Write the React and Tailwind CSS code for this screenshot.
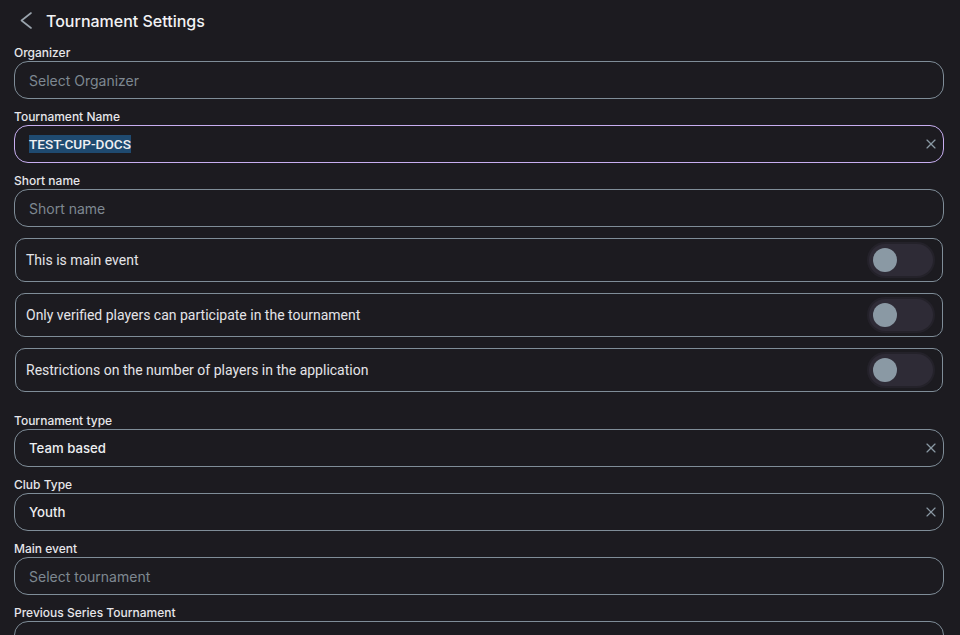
import { X } from "lucide-react";

const inter = { fontFamily: "Inter, 'Noto Sans', sans-serif" };

function Field({ label, placeholder, value, clearable, focused, selected, first }) {
  return (
    <div className={first ? "" : "mt-[9px]"}>
      <div className="text-[12px] leading-4 pt-px -mb-px text-[#e6e6ea] font-medium">{label}</div>
      <div
        className={`mt-px h-[38px] rounded-[14px] border flex items-center pl-[14px] pr-[4px] ${
          focused ? "border-[#c7aef0]" : "border-[#7f8d98]"
        }`}
      >
        <div className="flex-1 text-[14px]">
          {value ? (
            selected ? (
              <span
                className="bg-[#1f4a70] text-[#f0f0f2] text-[13.6px] font-medium py-[1px]"
                style={{ fontFamily: "Roboto, sans-serif" }}
              >
                {value}
              </span>
            ) : (
              <span className="text-[#eceef0] text-[13.2px] font-medium">{value}</span>
            )
          ) : (
            <span className="text-[#7e8891]">{placeholder}</span>
          )}
        </div>
        {clearable && <X className="w-[16px] h-[16px] text-[#8a98a3]" strokeWidth={1.75} />}
      </div>
    </div>
  );
}

function ToggleRow({ label }) {
  return (
    <div className="mt-[11px] mx-px h-[44px] rounded-[10px] border border-[#7f8d98] flex items-center pl-[10px] pr-[9px]">
      <div className="flex-1 text-[14px] text-[#e4e4e8]" style={{ fontFamily: "Roboto, sans-serif" }}>
        {label}
      </div>
      <div className="w-[64px] h-[32px] rounded-full bg-[#2e2b36] ring-2 ring-[#24222a] flex items-center pl-[4px]">
        <div className="w-[24px] h-[24px] rounded-full bg-[#8a99a4]" />
      </div>
    </div>
  );
}

export default function App() {
  return (
    <div className="h-[635px] overflow-hidden bg-[#1c1b20] text-white" style={inter}>
      <div className="h-[41px] flex items-center pl-[20px]">
        <svg width="12" height="17" viewBox="0 0 12 17" fill="none" className="text-[#9aa4ad]">
          <polyline points="11,1 1.5,8.5 11,16" stroke="currentColor" strokeWidth="1.6" strokeLinecap="round" strokeLinejoin="round" />
        </svg>
        <div className="ml-[14px] text-[16px] font-medium text-[#f2f2f4]">Tournament Settings</div>
      </div>
      <div className="pl-[14px] pr-[16px] pt-[3px]">
        <Field first label="Organizer" placeholder="Select Organizer" />
        <Field label="Tournament Name" value="TEST-CUP-DOCS" clearable focused selected />
        <Field label="Short name" placeholder="Short name" />
        <ToggleRow label="This is main event" />
        <ToggleRow label="Only verified players can participate in the tournament" />
        <ToggleRow label="Restrictions on the number of players in the application" />
        <div className="mt-[20px]">
          <Field label="Tournament type" value="Team based" clearable />
          <Field label="Club Type" value="Youth" clearable />
          <Field label="Main event" placeholder="Select tournament" />
          <Field label="Previous Series Tournament" placeholder="" />
        </div>
      </div>
    </div>
  );
}
